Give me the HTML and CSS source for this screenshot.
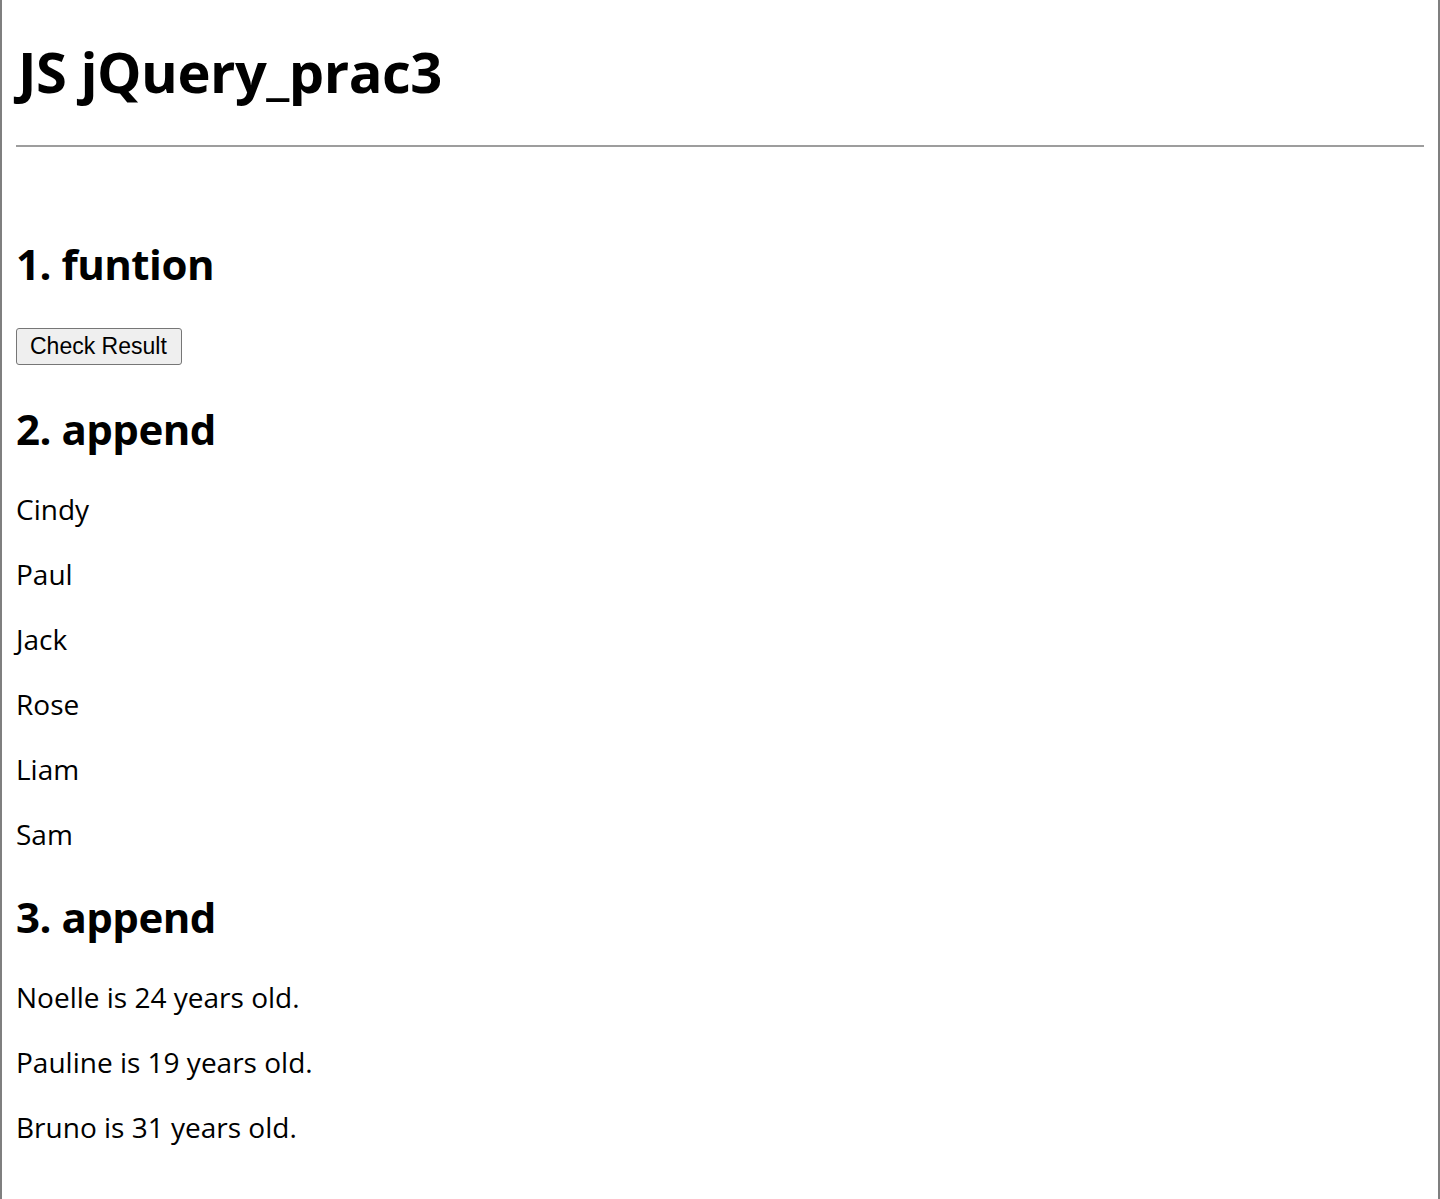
FILE: index.html
```html
<!DOCTYPE html>
<html lang="ko">
<head>
<meta charset="UTF-8">
<meta name="viewport" content="width=device-width, initial-scale=1.0">
<title>JS jQuery_prac3</title>
<link rel="stylesheet" href="styles.css">
</head>
<body>
<h1>JS jQuery_prac3</h1>
<hr>
<h2>1. funtion</h2>
<div class="actions">
<button id="checkButton">Check Result</button>
</div>
<h2>2. append</h2>
<div id="nameList">
<p>Cindy</p>
<p>Paul</p>
<p>Jack</p>
<p>Rose</p>
<p>Liam</p>
<p>Sam</p>
</div>
<h2>3. append</h2>
<div id="ageList">
<p>Noelle is 24 years old.</p>
<p>Pauline is 19 years old.</p>
<p>Bruno is 31 years old.</p>
</div>
</body>
</html>
```

FILE: styles.css
```css
html {
    background-color: #fff;
}
body {
    font-family: "Open Sans", "Noto Sans CJK KR", sans-serif;
    color: #000;
    margin: 0;
    padding: 1px 14px 0;
    min-height: 100vh;
    box-sizing: border-box;
    border-left: 2px solid #7f7f7f;
    border-right: 2px solid #7f7f7f;
}
h1 {
    font-size: 56px;
    line-height: 74px;
    font-weight: bold;
    letter-spacing: -0.5px;
    margin: 33px 0 37px 2px;
}
hr {
    height: 0;
    border: none;
    border-top: 2px solid #9d9d9d;
    margin: 0 0 89px;
}
h2 {
    font-size: 42px;
    line-height: 56px;
    font-weight: bold;
    letter-spacing: -0.5px;
    margin: 36px 0 34px;
}
p {
    font-size: 28px;
    line-height: 37px;
    margin: 28px 0;
}
.actions {
    margin: 36px 0;
}
button {
    font-family: "Liberation Sans", Arial, sans-serif;
    font-size: 23px;
    height: 37px;
    padding: 0 14px 0 13px;
    color: #000;
    background-color: #efefef;
    border: 1px solid #767676;
    border-radius: 3px;
}
```
